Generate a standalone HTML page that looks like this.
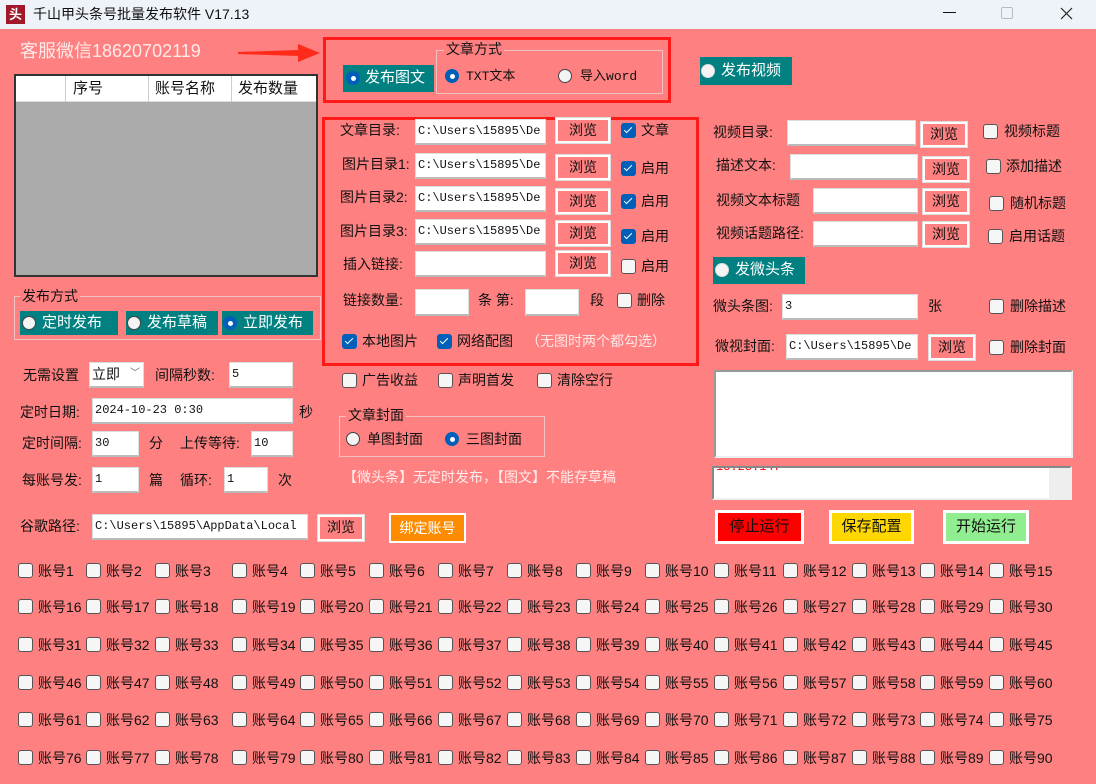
<!DOCTYPE html><html><head><meta charset="utf-8"><style>
*{box-sizing:border-box;margin:0;padding:0}
body{width:1096px;height:784px;background:#ff8080;position:relative;overflow:hidden;font-family:"Liberation Sans","Noto Sans CJK SC",sans-serif;font-size:14px;color:#111}
.a{position:absolute;white-space:nowrap}
.t{position:absolute;white-space:nowrap;line-height:18px}
.in{position:absolute;background:#fff;border:1px solid #ddd;border-bottom:2px solid #bbb;font-family:"Liberation Mono","Noto Sans CJK SC",monospace;font-size:12px;line-height:22px;padding-left:2px;overflow:hidden;white-space:nowrap}
.bt{position:absolute;background:#ff8080;border:2px solid #fff;outline:1px solid #ddd;text-align:center;font-size:14px;line-height:20px;box-shadow:0 0 0 1px #eee}
.cb{position:absolute;width:15px;height:15px;background:#f6f6f6;border:1px solid #555;border-radius:3px}
.cb.on{background:#005fb8;border-color:#005fb8}
.cb.on:after{content:"";position:absolute;left:4px;top:1px;width:3px;height:7px;border:solid #fff;border-width:0 1.5px 1.5px 0;transform:rotate(45deg)}
.rd{position:absolute;width:14px;height:14px;border-radius:50%;background:#f4f4f4;border:1px solid #444}
.rd.on{background:#005fb8;border-color:#005fb8}
.rd.on:after{content:"";position:absolute;left:3.5px;top:3.5px;width:5px;height:5px;border-radius:50%;background:#fff}
.teal{position:absolute;background:#008080;color:#fff;font-size:15px;line-height:26px}
.grp{position:absolute;border:1px solid #f2c0c0}
.red{position:absolute;border:3px solid #ff1a1a}
</style></head><body>
<div class="a" style="left:0;top:0;width:1096px;height:29px;background:#eef2f9"></div>
<div class="a" style="left:6px;top:5px;width:19px;height:19px;background:#a0182a;color:#fff;font-size:13px;line-height:19px;text-align:center;font-weight:bold">头</div>
<div class="t" style="left:33px;top:5px;font-size:14px">千山甲头条号批量发布软件 V17.13</div>
<div class="a" style="left:943px;top:12px;width:13px;height:1px;background:#111"></div>
<div class="a" style="left:1001px;top:7px;width:12px;height:12px;border:1px solid #bbb;border-radius:2px"></div>
<svg class="a" style="left:1060px;top:7px" width="13" height="13"><path d="M1 1L12 12M12 1L1 12" stroke="#222" stroke-width="1.2"/></svg>

<div class="t" style="left:20px;top:39px;font-size:18px;line-height:24px;color:#ffeaea">客服微信18620702119</div>
<svg class="a" style="left:238px;top:44px" width="84" height="18"><polygon points="0,8 60,6 60,0 82,9 60,18 60,12 0,10" fill="#ff2a1a"/></svg>
<svg class="a" style="left:232px;top:188px" width="84" height="18"><polygon points="0,8 60,6 60,0 82,9 60,18 60,12 0,10" fill="#ff2a1a"/></svg>

<div class="a" style="left:14px;top:74px;width:304px;height:203px;background:#ababab;border:2px solid #333"></div>
<div class="a" style="left:16px;top:76px;width:300px;height:26px;background:#fff;border-bottom:1px solid #ddd"></div>
<div class="a" style="left:65px;top:76px;width:1px;height:26px;background:#ccc"></div>
<div class="a" style="left:148px;top:76px;width:1px;height:26px;background:#ccc"></div>
<div class="a" style="left:231px;top:76px;width:1px;height:26px;background:#ccc"></div>
<div class="t" style="left:73px;top:80px;font-size:15px">序号</div>
<div class="t" style="left:155px;top:80px;font-size:15px">账号名称</div>
<div class="t" style="left:238px;top:80px;font-size:15px">发布数量</div>

<div class="grp" style="left:14px;top:296px;width:307px;height:44px"></div>
<div class="t" style="left:20px;top:287px;background:#ff8080;font-size:14px;padding:0 2px">发布方式</div>
<div class="teal" style="left:20px;top:311px;width:98px;height:24px;line-height:24px"><span class="rd" style="left:2px;top:5px"></span><span style="margin-left:22px">定时发布</span></div>
<div class="teal" style="left:126px;top:311px;width:92px;height:24px;line-height:24px"><span class="rd" style="left:1px;top:5px"></span><span style="margin-left:21px">发布草稿</span></div>
<div class="teal" style="left:222px;top:311px;width:91px;height:24px;line-height:24px"><span class="rd on" style="left:1px;top:5px"></span><span style="margin-left:21px">立即发布</span></div>

<div class="red" style="left:323px;top:37px;width:348px;height:66px"></div>
<div class="teal" style="left:343px;top:65px;width:91px;height:27px"><span class="rd on" style="left:3px;top:6px"></span><span style="margin-left:22px">发布图文</span></div>
<div class="grp" style="left:436px;top:50px;width:227px;height:44px"></div>
<div class="t" style="left:444px;top:40px;background:#ff8080;padding:0 2px">文章方式</div>
<span class="rd on" style="left:445px;top:69px"></span><div class="t" style="left:466px;top:67px;font-size:13px"><span style="font-family:'Liberation Mono',monospace">TXT</span>文本</div>
<span class="rd" style="left:558px;top:69px"></span><div class="t" style="left:580px;top:67px;font-size:13px">导入<span style="font-family:'Liberation Mono',monospace">word</span></div>
<div class="teal" style="left:700px;top:57px;width:92px;height:28px;line-height:28px"><span class="rd" style="left:1px;top:7px;border-color:#ddd"></span><span style="margin-left:21px">发布视频</span></div>

<div class="red" style="left:322px;top:117px;width:377px;height:249px"></div>
<div class="t" style="left:340px;top:121px">文章目录:</div><div class="in" style="left:415px;top:119px;width:131px;height:26px">C:\Users\15895\De</div><div class="bt" style="left:556px;top:118px;width:54px;height:25px">浏览</div><span class="cb on" style="left:621px;top:123px"></span><div class="t" style="left:641px;top:121px">文章</div>
<div class="t" style="left:342px;top:155px">图片目录1:</div><div class="in" style="left:415px;top:153px;width:131px;height:26px">C:\Users\15895\De</div><div class="bt" style="left:556px;top:155px;width:54px;height:25px">浏览</div><span class="cb on" style="left:621px;top:161px"></span><div class="t" style="left:641px;top:159px">启用</div>
<div class="t" style="left:340px;top:188px">图片目录2:</div><div class="in" style="left:415px;top:186px;width:131px;height:26px">C:\Users\15895\De</div><div class="bt" style="left:556px;top:189px;width:54px;height:25px">浏览</div><span class="cb on" style="left:621px;top:194px"></span><div class="t" style="left:641px;top:192px">启用</div>
<div class="t" style="left:340px;top:222px">图片目录3:</div><div class="in" style="left:415px;top:219px;width:131px;height:26px">C:\Users\15895\De</div><div class="bt" style="left:556px;top:221px;width:54px;height:25px">浏览</div><span class="cb on" style="left:621px;top:229px"></span><div class="t" style="left:641px;top:227px">启用</div>
<div class="t" style="left:343px;top:255px">插入链接:</div><div class="in" style="left:415px;top:251px;width:131px;height:26px"></div><div class="bt" style="left:556px;top:251px;width:54px;height:25px">浏览</div><span class="cb" style="left:621px;top:259px"></span><div class="t" style="left:641px;top:257px">启用</div>
<div class="t" style="left:343px;top:291px">链接数量:</div><div class="in" style="left:415px;top:289px;width:54px;height:27px"></div><div class="t" style="left:478px;top:291px">条 第:</div><div class="in" style="left:525px;top:289px;width:54px;height:27px"></div><div class="t" style="left:590px;top:291px">段</div><span class="cb" style="left:617px;top:293px"></span><div class="t" style="left:637px;top:291px">删除</div>
<span class="cb on" style="left:342px;top:334px"></span><div class="t" style="left:362px;top:332px">本地图片</div>
<span class="cb on" style="left:437px;top:334px"></span><div class="t" style="left:457px;top:332px">网络配图</div>
<div class="t" style="left:526px;top:332px;color:#ffe6e6">（无图时两个都勾选）</div>

<div class="t" style="left:23px;top:366px">无需设置</div>
<div class="in" style="left:89px;top:362px;width:55px;height:26px;font-family:'Liberation Sans','Noto Sans CJK SC',sans-serif;font-size:14px">立即<span style="position:absolute;right:3px;top:0;font-size:10px;color:#666">﹀</span></div>
<div class="t" style="left:155px;top:366px">间隔秒数:</div><div class="in" style="left:229px;top:362px;width:64px;height:26px">5</div>
<div class="t" style="left:20px;top:403px">定时日期:</div><div class="in" style="left:92px;top:398px;width:201px;height:26px">2024-10-23 0:30</div><div class="t" style="left:299px;top:403px">秒</div>
<div class="t" style="left:22px;top:434px">定时间隔:</div><div class="in" style="left:92px;top:431px;width:47px;height:26px">30</div><div class="t" style="left:149px;top:434px">分</div><div class="t" style="left:180px;top:434px">上传等待:</div><div class="in" style="left:251px;top:431px;width:42px;height:26px">10</div>
<div class="t" style="left:22px;top:471px">每账号发:</div><div class="in" style="left:92px;top:467px;width:47px;height:26px">1</div><div class="t" style="left:149px;top:471px">篇</div><div class="t" style="left:180px;top:471px">循环:</div><div class="in" style="left:224px;top:467px;width:44px;height:26px">1</div><div class="t" style="left:278px;top:471px">次</div>
<div class="t" style="left:20px;top:517px">谷歌路径:</div><div class="in" style="left:92px;top:514px;width:216px;height:26px">C:\Users\15895\AppData\Local</div>
<div class="bt" style="left:318px;top:515px;width:46px;height:26px">浏览</div>
<div class="a" style="left:389px;top:513px;width:77px;height:30px;background:#ff8c00;border:2px solid #fff;color:#fff;text-align:center;line-height:26px">绑定账号</div>

<span class="cb" style="left:342px;top:373px"></span><div class="t" style="left:362px;top:371px">广告收益</div>
<span class="cb" style="left:438px;top:373px"></span><div class="t" style="left:458px;top:371px">声明首发</div>
<span class="cb" style="left:537px;top:373px"></span><div class="t" style="left:557px;top:371px">清除空行</div>
<div class="grp" style="left:339px;top:416px;width:206px;height:41px"></div>
<div class="t" style="left:346px;top:406px;background:#ff8080;padding:0 2px">文章封面</div>
<span class="rd" style="left:346px;top:432px"></span><div class="t" style="left:367px;top:430px">单图封面</div>
<span class="rd on" style="left:445px;top:432px"></span><div class="t" style="left:466px;top:430px">三图封面</div>
<div class="t" style="left:343px;top:468px;color:#ffecec">【微头条】无定时发布，【图文】不能存草稿</div>

<div class="t" style="left:713px;top:123px">视频目录:</div><div class="in" style="left:787px;top:120px;width:129px;height:26px"></div><div class="bt" style="left:921px;top:122px;width:46px;height:25px">浏览</div><span class="cb" style="left:983px;top:124px"></span><div class="t" style="left:1004px;top:122px">视频标题</div>
<div class="t" style="left:716px;top:156px">描述文本:</div><div class="in" style="left:790px;top:154px;width:128px;height:26px"></div><div class="bt" style="left:923px;top:157px;width:46px;height:25px">浏览</div><span class="cb" style="left:986px;top:159px"></span><div class="t" style="left:1006px;top:157px">添加描述</div>
<div class="t" style="left:716px;top:191px">视频文本标题</div><div class="in" style="left:813px;top:188px;width:105px;height:26px"></div><div class="bt" style="left:923px;top:189px;width:46px;height:25px">浏览</div><span class="cb" style="left:989px;top:196px"></span><div class="t" style="left:1010px;top:194px">随机标题</div>
<div class="t" style="left:716px;top:224px">视频话题路径:</div><div class="in" style="left:813px;top:221px;width:105px;height:26px"></div><div class="bt" style="left:923px;top:222px;width:46px;height:25px">浏览</div><span class="cb" style="left:988px;top:229px"></span><div class="t" style="left:1009px;top:227px">启用话题</div>
<div class="teal" style="left:713px;top:257px;width:92px;height:27px"><span class="rd" style="left:2px;top:6px;border-color:#ddd"></span><span style="margin-left:22px">发微头条</span></div>
<div class="t" style="left:713px;top:297px">微头条图:</div><div class="in" style="left:782px;top:294px;width:136px;height:26px">3</div><div class="t" style="left:928px;top:297px">张</div><span class="cb" style="left:989px;top:299px"></span><div class="t" style="left:1010px;top:297px">删除描述</div>
<div class="t" style="left:715px;top:337px">微视封面:</div><div class="in" style="left:786px;top:334px;width:132px;height:26px">C:\Users\15895\De</div><div class="bt" style="left:929px;top:335px;width:46px;height:25px">浏览</div><span class="cb" style="left:989px;top:340px"></span><div class="t" style="left:1010px;top:338px">删除封面</div>
<div class="a" style="left:714px;top:370px;width:359px;height:88px;background:#fff;border:2px solid #999;border-right-color:#eee;border-bottom-color:#eee"></div>
<div class="a" style="left:712px;top:466px;width:360px;height:34px;background:#fff;border:2px solid #888;border-right-color:#eee;border-bottom-color:#eee;overflow:hidden"><div style="position:absolute;right:0;top:0;width:21px;height:32px;background:#eee"></div><div style="position:absolute;left:2px;top:-8px;color:#f00;font-family:'Liberation Mono',monospace;font-size:12px">15:23:147</div></div>
<div class="a" style="left:715px;top:510px;width:89px;height:34px;border:3px solid #fff;background:#f00;text-align:center;line-height:28px;font-size:15px">停止运行</div>
<div class="a" style="left:829px;top:510px;width:85px;height:34px;border:3px solid #fff;background:#ffd700;text-align:center;line-height:28px;font-size:15px">保存配置</div>
<div class="a" style="left:943px;top:510px;width:86px;height:34px;border:3px solid #fff;background:#90ee90;text-align:center;line-height:28px;font-size:15px">开始运行</div>

<div id="g"></div>
<script>
var xs=[18,86,155,232,300,369,438,507,576,645,714,783,852,920,989],ys=[571,607,645,683,720,758],h="",n=1;
for(var r=0;r<6;r++)for(var c=0;c<15;c++){h+='<span class="cb" style="left:'+xs[c]+'px;top:'+(ys[r]-8)+'px"></span><div class="t" style="left:'+(xs[c]+20)+'px;top:'+(ys[r]-9)+'px">账号'+n+'</div>';n++;}
document.getElementById("g").innerHTML=h;
</script>
</body></html>
